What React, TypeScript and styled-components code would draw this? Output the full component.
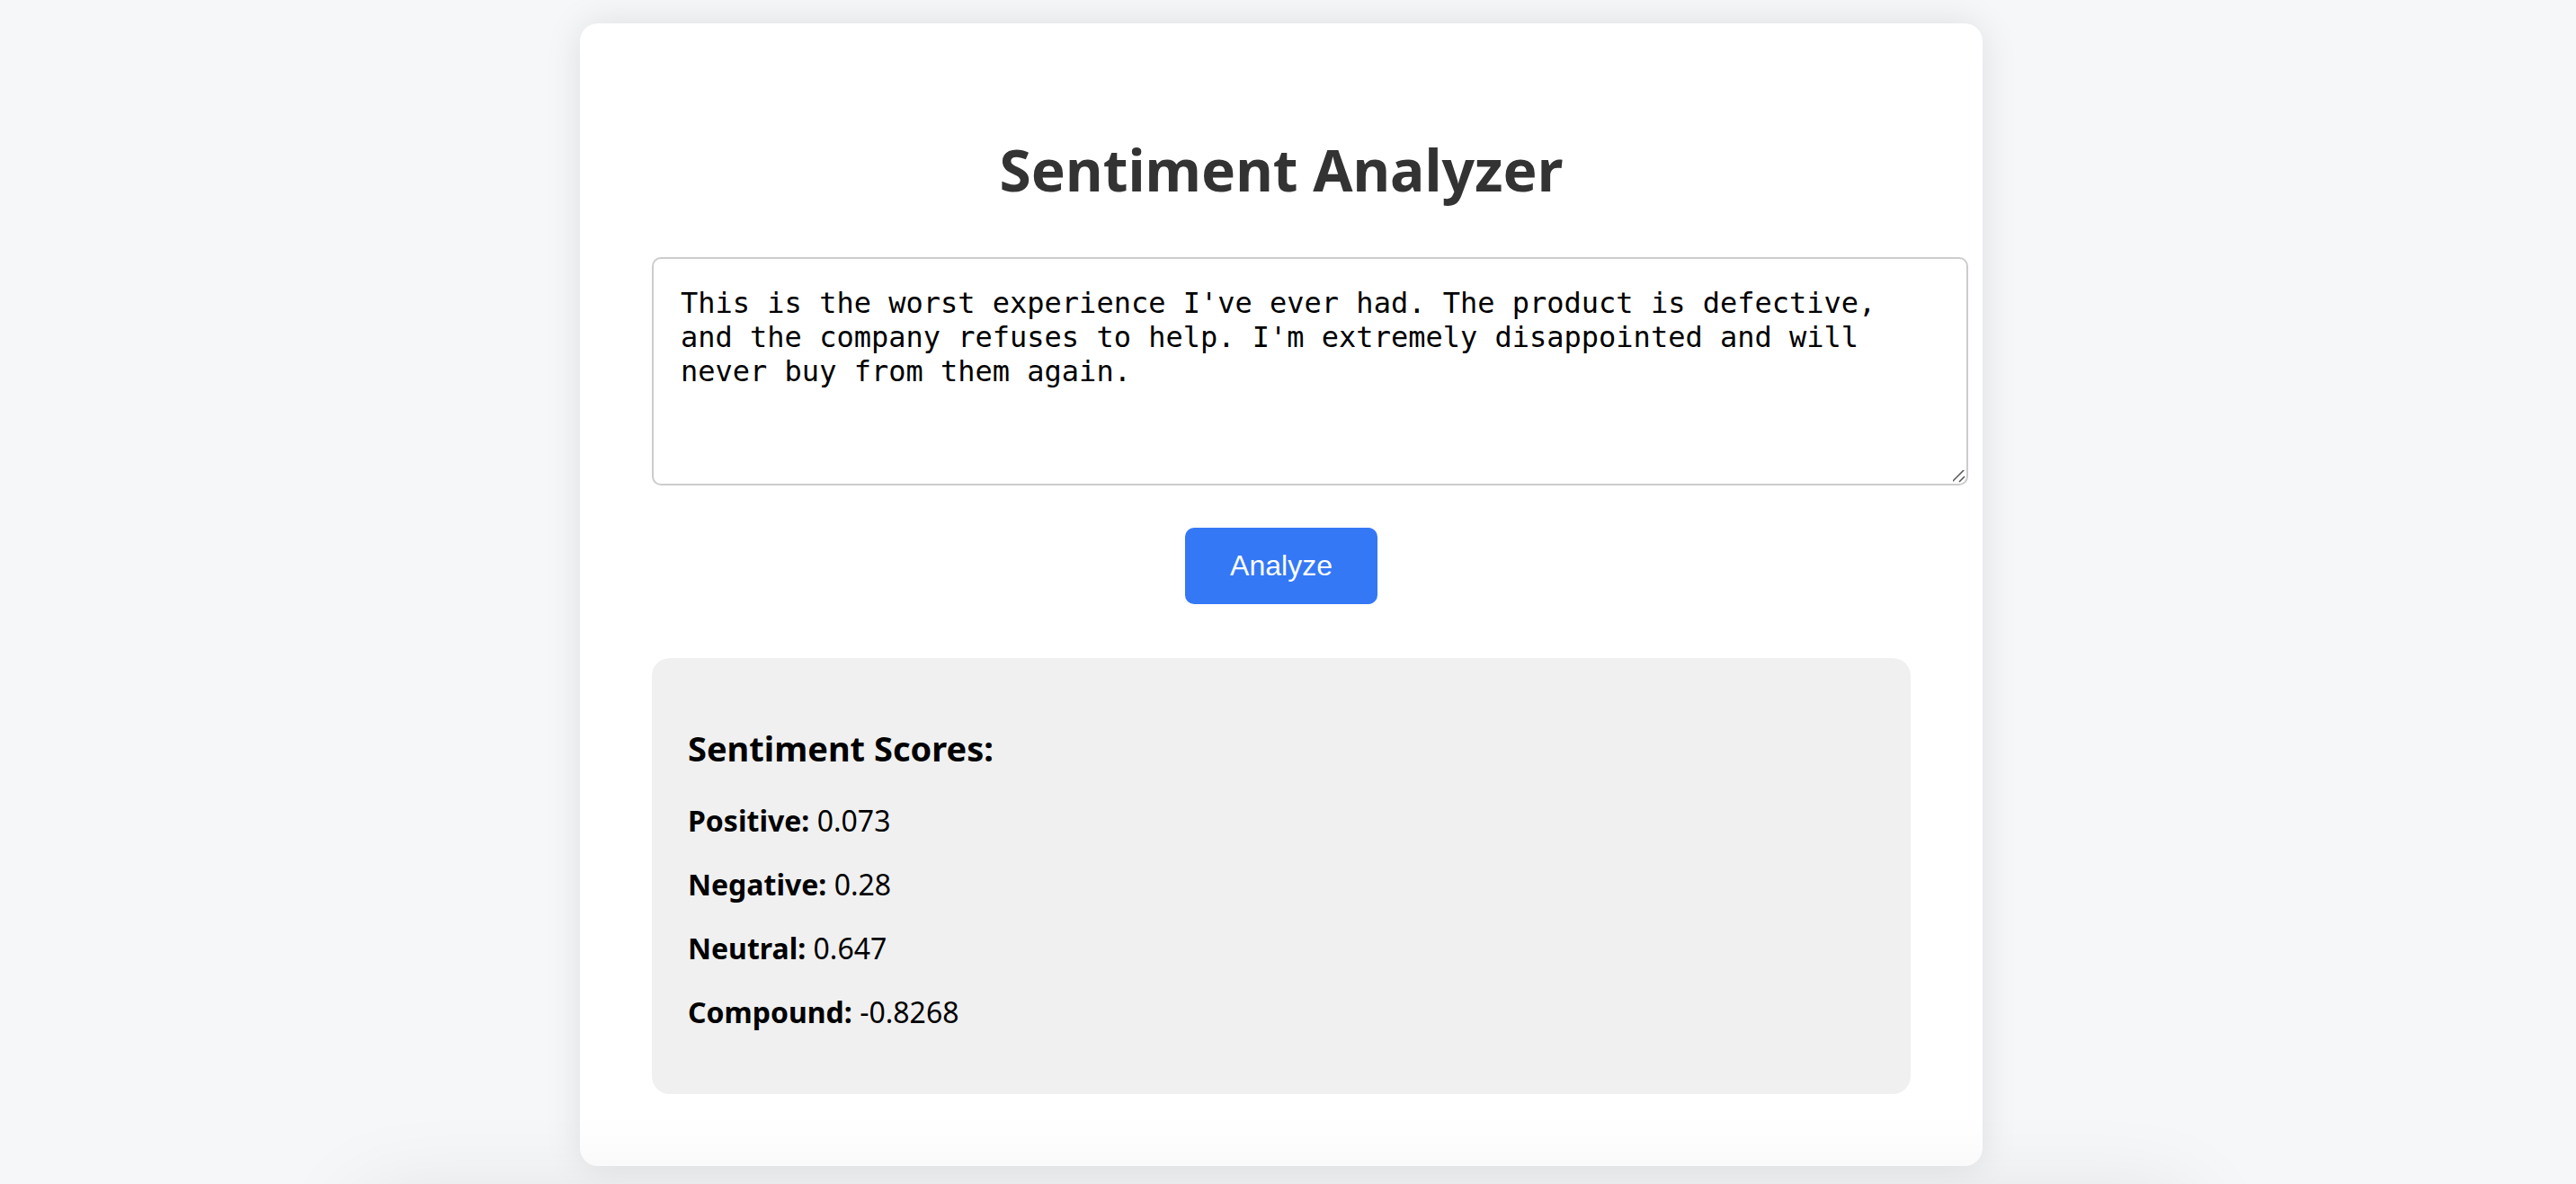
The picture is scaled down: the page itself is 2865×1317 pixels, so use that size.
import React, { useState } from "react";
import styled, { createGlobalStyle } from "styled-components";

const GlobalStyle = createGlobalStyle`
  body {
    margin: 0;
    background: #f5f7f9;
    color: #000;
    font-family: "Noto Sans", sans-serif;
    font-size: 32px;
    line-height: 39px;
  }
`;

const Page = styled.main`
  padding: 26px 15px 20px 0;
`;

const Card = styled.section`
  max-width: 1400px;
  margin: 0 auto;
  padding: 80px;
  border-radius: 20px;
  background: #fff;
  box-shadow: 0 0 40px rgba(0, 0, 0, 0.1);
`;

const Title = styled.h1`
  margin: 44px 0 59px;
  color: #333;
  font-size: 64px;
  line-height: 77px;
  text-align: center;
`;

const Form = styled.form`
  display: flex;
  flex-direction: column;
  align-items: center;
  gap: 47px;
`;

const grip = `url("data:image/svg+xml,%3Csvg xmlns='http://www.w3.org/2000/svg' width='18' height='18'%3E%3Cpath d='M2 16L16 2M10 16L16 10' stroke='%23555' stroke-width='1.5'/%3E%3C/svg%3E")`;

const ReviewBox = styled.textarea`
  box-sizing: content-box;
  align-self: flex-start;
  width: 100%;
  padding: 30px;
  border: 2px solid #ccc;
  border-radius: 10px;
  background: #fff;
  color: #000;
  font-family: "DejaVu Sans Mono", monospace;
  font-size: 32px;
  line-height: 38px;
  outline: none;
  resize: vertical;

  &::-webkit-scrollbar {
    width: 18px;
    height: 18px;
  }

  &::-webkit-resizer {
    background: ${grip} no-repeat right bottom;
  }
`;

const AnalyzeButton = styled.button`
  padding: 24px 50px;
  border: none;
  border-radius: 10px;
  background: #3478f6;
  color: #fff;
  font-family: "Liberation Sans", Arial, sans-serif;
  font-size: 32px;
  line-height: 37px;
  cursor: pointer;
`;

const Results = styled.section`
  margin-top: 60px;
  padding: 40px;
  border-radius: 20px;
  background: #f0f0f0;
`;

const ResultsTitle = styled.h3`
  margin: 37px 0;
  font-size: 38px;
  line-height: 47px;
`;

const Score = styled.p`
  margin: 32px 0;
`;

const BottomShade = styled.div`
  position: fixed;
  top: 100%;
  left: 14%;
  right: 15%;
  height: 200px;
  border-radius: 20px;
  box-shadow: 0 16px 100px rgba(0, 0, 0, 0.1);
  pointer-events: none;
`;

const scores = [
  { label: "Positive", value: "0.073" },
  { label: "Negative", value: "0.28" },
  { label: "Neutral", value: "0.647" },
  { label: "Compound", value: "-0.8268" },
];

export default function App() {
  const [text, setText] = useState(
    "This is the worst experience I've ever had. The product is defective, and the company refuses to help. I'm extremely disappointed and will never buy from them again."
  );

  return (
    <>
      <GlobalStyle />
      <Page>
        <Card>
          <Title>Sentiment Analyzer</Title>
          <Form onSubmit={(event) => event.preventDefault()}>
            <ReviewBox
              aria-label="Text to analyze"
              rows={5}
              spellCheck={false}
              value={text}
              onChange={(event) => setText(event.target.value)}
            />
            <AnalyzeButton type="submit">Analyze</AnalyzeButton>
          </Form>
          <Results>
            <ResultsTitle>Sentiment Scores:</ResultsTitle>
            {scores.map(({ label, value }) => (
              <Score key={label}>
                <strong>{label}:</strong> {value}
              </Score>
            ))}
          </Results>
        </Card>
      </Page>
      <BottomShade />
    </>
  );
}
